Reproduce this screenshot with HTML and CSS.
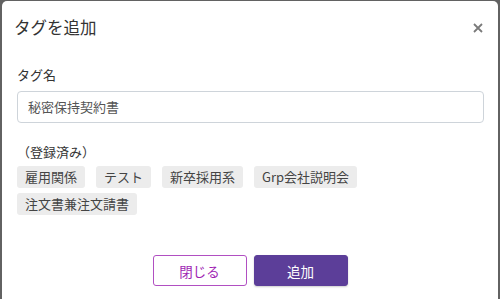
FILE: index.html
```html
<!DOCTYPE html>
<html lang="ja">
<head>
<meta charset="utf-8">
<link rel="stylesheet" href="styles.css">
</head>
<body>
<div class="modal">
  <div class="modal-header">
    <h5 class="modal-title">タグを追加</h5>
    <button class="close" aria-label="閉じる">
      <svg width="10" height="10" viewBox="0 0 10 10"><path d="M1 1L9 9M9 1L1 9" stroke="#7a7a7a" stroke-width="1.8" fill="none"/></svg>
    </button>
  </div>
  <div class="modal-body">
    <label class="field-label">タグ名</label>
    <div class="input">秘密保持契約書</div>
    <div class="registered">（登録済み）</div>
    <div class="tags">
      <span class="tag">雇用関係</span>
      <span class="tag">テスト</span>
      <span class="tag">新卒採用系</span>
      <span class="tag">Grp会社説明会</span>
      <span class="tag">注文書兼注文請書</span>
    </div>
  </div>
  <div class="modal-footer">
    <button class="btn btn-outline">閉じる</button>
    <button class="btn btn-primary">追加</button>
  </div>
</div>
</body>
</html>
```

FILE: styles.css
```css
html, body {
  margin: 0;
  padding: 0;
  height: 100%;
  overflow: hidden;
}
body {
  background: #626262;
  font-family: "Noto Sans CJK JP", "Noto Sans", sans-serif;
  color: #333;
}
.modal {
  margin: 1px 2px 0 2px;
  height: 298px;
  background: #fff;
  border-radius: 5px 5px 0 0;
  display: flex;
  flex-direction: column;
}
.modal-header {
  display: flex;
  align-items: center;
  justify-content: space-between;
  padding: 13px 15px 0 12px;
  height: 26px;
}
.modal-title {
  margin: 0;
  font-size: 16.5px;
  font-weight: 400;
  line-height: 26px;
  color: #333;
}
.close {
  border: 0;
  background: none;
  padding: 0;
  width: 10px;
  height: 10px;
  display: flex;
  margin-top: 2px;
}
.modal-body {
  padding: 25px 14px 0 15px;
  display: flex;
  flex-direction: column;
}
.field-label {
  font-size: 13px;
  line-height: 20px;
  margin-bottom: 6px;
  color: #333;
}
.input {
  height: 30px;
  border: 1px solid #ced4da;
  border-radius: 4px;
  padding: 0 10px;
  font-size: 13px;
  line-height: 30px;
  color: #555;
}
.registered {
  margin-top: 19px;
  font-size: 13px;
  line-height: 20px;
  color: #333;
}
.tags {
  margin-top: 4px;
  display: flex;
  flex-wrap: wrap;
  column-gap: 11px;
  row-gap: 5px;
}
.tag {
  background: #ececec;
  border-radius: 3px;
  padding: 0 8px;
  height: 22px;
  font-size: 13px;
  line-height: 22px;
  color: #444;
}
.modal-footer {
  display: flex;
  justify-content: center;
  gap: 7px;
  margin-top: 40px;
}
.btn {
  width: 94px;
  height: 31px;
  border-radius: 3px;
  font-family: inherit;
  font-size: 13.5px;
  padding: 0;
  cursor: pointer;
}
.btn-outline {
  background: #fff;
  border: 1px solid #b14fc2;
  color: #a01fb4;
}
.btn-primary {
  background: #5c3e99;
  border: 1px solid #5c3e99;
  color: #fff;
  box-shadow: 0 1px 2px rgba(0,0,0,0.2);
}
```
